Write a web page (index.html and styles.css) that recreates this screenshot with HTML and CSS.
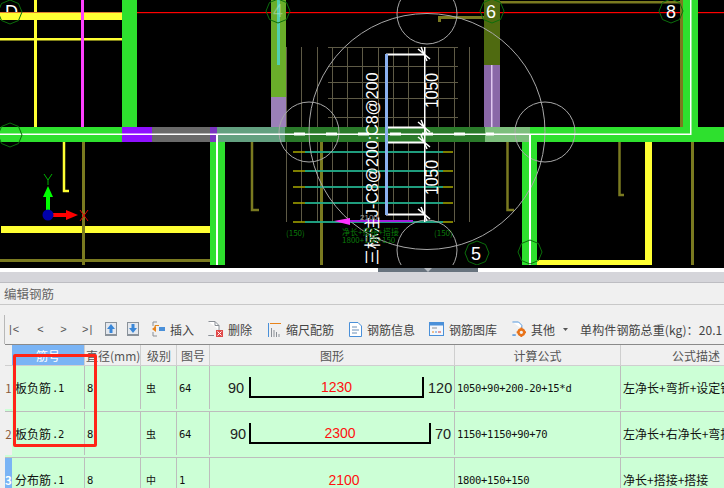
FILE: index.html
```html
<!DOCTYPE html>
<html lang="zh">
<head>
<meta charset="utf-8">
<title>编辑钢筋</title>
<link rel="stylesheet" href="styles.css">
</head>
<body>
<div class="app">
  <svg class="cad" width="724" height="268" viewBox="0 0 724 268">
    <defs>
      <polygon id="hex" points="0,-12 8.500,-8.500 12,0 8.500,8.500 0,12 -8.500,8.500 -12,0 -8.500,-8.500" fill="none" stroke="#0b6e0b"/>
      <path id="tick" d="M-6-5 6 5M-3-7 3 7" stroke="#fff" stroke-width="1.500" fill="none"/>
    </defs>
    <rect width="724" height="268" fill="#000"/>
    <text class="cad-text grid-no" x="5" y="18">D</text>
    <g fill="#ffff33">
      <rect x="34" y="0" width="3" height="127"/>
      <rect x="0" y="13" width="122" height="7"/>
      <rect x="0" y="38" width="122" height="2.500"/>
      <rect x="1" y="226" width="209" height="7"/>
      <rect x="645" y="142" width="7" height="123"/>
      <rect x="537" y="260" width="115" height="5"/>
    </g>
    <rect x="0" y="12" width="122" height="1" fill="#e08030"/>
    <rect x="81" y="0" width="3" height="127" fill="#ff40ff"/>
    <rect x="137" y="12" width="587" height="1.200" fill="#ff0000"/>
    <g fill="#7a7a20">
      <rect x="82" y="135" width="3" height="130"/>
      <rect x="0" y="259" width="217" height="3"/>
      <rect x="500" y="1" width="186" height="2.500"/>
      <rect x="691" y="142" width="3" height="123"/>
      <rect x="680" y="0" width="3" height="127"/>
      <rect x="320" y="135" width="3" height="130"/>
      <rect x="438" y="16" width="47" height="3"/>
      <rect x="438" y="16" width="3" height="6"/>
    </g>
    <g fill="none" stroke="#7a7a20" stroke-width="2.500">
      <path d="M259 135H252V210H259"/>
      <path d="M514 135H507.500V210H514"/>
      <path d="M619.500 142V195H624"/>
    </g>
    <path d="M69 135H64V191H69" fill="none" stroke="#ffff33" stroke-width="2.500"/>
    <g fill="#2ee02e">
      <rect x="122" y="0" width="15" height="127"/>
      <rect x="0" y="127" width="122" height="15"/>
      <rect x="210" y="142" width="15" height="123"/>
      <rect x="522" y="142" width="15" height="123"/>
      <rect x="683" y="0" width="15" height="127"/>
      <rect x="530" y="127" width="194" height="15"/>
    </g>
    <rect x="271" y="0" width="15" height="97" fill="#6aae2a"/>
    <rect x="271" y="97" width="15" height="30" fill="#9b80b8"/>
    <rect x="277" y="0" width="3" height="65" fill="#50d0b0"/>
    <rect x="484" y="0" width="16" height="65" fill="#4f6a10"/>
    <rect x="484" y="65" width="16" height="62" fill="#8a68a8"/>
    <rect x="491" y="65" width="1.500" height="62" fill="#e0c8f0"/>
    <g stroke="#5e5a46" stroke-width="1">
      <path d="M286.500 47V222M301.500 47V222M317.500 47V222M332.500 47V222M347.500 47V222M362.500 47V222M378.500 47V222M393.500 47V222M408.500 47V222M438.500 47V222M454.500 47V222M469.500 47V222"/>
      <path d="M328 47.500H458M328 66.500H458M328 82.500H458M328 98.500H458M328 117.500H458"/>
    </g>
    <g stroke="#a8a800" stroke-width="1.500">
      <path d="M293 152H453M293 171H453M293 187H453M293 203H453M293 222H453"/>
    </g>
    <g stroke="#00a8a8" stroke-width="1.500">
      <path d="M305 152H443M305 171H443M305 187H443M305 203H443M305 222H443"/>
    </g>
    <rect x="122" y="127" width="30" height="15" fill="#8f10ff"/>
    <rect x="152" y="127" width="58" height="15" fill="#6a6a6a"/>
    <rect x="210" y="127" width="7" height="15" fill="#7a35c0"/>
    <rect x="217" y="127" width="68" height="15" fill="#63a080"/>
    <rect x="285" y="127" width="200" height="15" fill="#2a7a2a"/>
    <rect x="485" y="127" width="45" height="15" fill="#7dbf7d"/>
    <g fill="none" stroke="#a8a8a8">
      <circle cx="427" cy="131.500" r="118"/>
      <circle cx="309" cy="132" r="30"/>
      <circle cx="427" cy="14" r="30"/>
      <circle cx="427" cy="250" r="30"/>
      <circle cx="545" cy="132" r="30"/>
    </g>
    <g fill="#fff">
      <rect x="0" y="133.500" width="690" height="1.500"/>
      <rect x="690" y="0" width="1.500" height="135"/>
      <rect x="216" y="134" width="2" height="131"/>
      <rect x="529" y="134" width="2" height="131"/>
      <rect x="424" y="47" width="1.500" height="175"/>
      <rect x="386" y="53.500" width="38" height="2"/>
      <rect x="386" y="126.500" width="38" height="2"/>
      <rect x="386" y="141.500" width="38" height="2"/>
      <rect x="386" y="213.500" width="38" height="2"/>
    </g>
    <path d="M294 134H494" stroke="#fff" stroke-width="3" stroke-dasharray="11 21" fill="none"/>
    <rect x="385" y="54" width="3" height="161" fill="#8ab0f0"/>
    <use href="#tick" x="424" y="54"/>
    <use href="#tick" x="424" y="127"/>
    <use href="#tick" x="424" y="142"/>
    <use href="#tick" x="424" y="214"/>
    <rect x="340" y="220" width="73" height="2" fill="#a020e0"/>
    <polygon points="334,221 350,218 350,225" fill="#ff30ff"/>
    <text class="cad-text dim" transform="translate(438 108) rotate(-90)" textLength="35" lengthAdjust="spacingAndGlyphs">1050</text>
    <text class="cad-text dim" transform="translate(438 195) rotate(-90)" textLength="35" lengthAdjust="spacingAndGlyphs">1050</text>
    <text class="cad-text note" transform="translate(378 265) rotate(-90)">三标注J-C8@200:C8@200</text>
    <text class="cad-text tiny" x="360" y="220">2100</text>
    <g class="cad-green">
      <text x="286" y="236">(150)</text>
      <text x="342" y="235">净长+搭接+搭接</text>
      <text x="342" y="243">1800+150+150</text>
      <text x="434" y="236">(150)</text>
    </g>
    <use href="#hex" x="10" y="12"/>
    <use href="#hex" x="10" y="135"/>
    <use href="#hex" x="278" y="11"/>
    <use href="#hex" x="492" y="11"/>
    <use href="#hex" x="671" y="11"/>
    <use href="#hex" x="477" y="253"/>
    <use href="#hex" x="530" y="252"/>
    <text class="cad-text grid-no faint" x="273" y="17">4</text>
    <text class="cad-text grid-no" x="486" y="18">6</text>
    <text class="cad-text grid-no" x="666" y="18">8</text>
    <text class="cad-text grid-no" x="471" y="260">5</text>
    <rect x="46" y="196" width="4" height="15" fill="#00ff00"/>
    <polygon points="48,186 53,197 43,197" fill="#00ff00"/>
    <path d="M44 174 48 180 52 174M48 180V185" stroke="#00b000" fill="none"/>
    <rect x="53" y="213" width="14" height="4" fill="#ff0000"/>
    <polygon points="78,215 66,210 66,220" fill="#ff0000"/>
    <path d="M80 210 88 221M88 210 80 221" stroke="#e00000" fill="none"/>
    <circle cx="48" cy="215" r="5.500" fill="#0000aa"/>
    <rect y="265" width="724" height="3" fill="#000"/>
  </svg>

  <div class="splitter"><div class="handle"><svg width="8" height="4" viewBox="0 0 8 4"><polygon points="0,0 8,0 4,4" fill="#b8bec4"/></svg></div></div>
  <div class="band"></div>
  <div class="title">编辑钢筋</div>

  <div class="toolbar">
    <div class="tools">
      <span class="nav nav-first">|&lt;</span>
      <span class="nav">&lt;</span>
      <span class="nav">&gt;</span>
      <span class="nav nav-last">&gt;|</span>
      <svg class="ico ico-up" width="12" height="14" viewBox="0 0 12 14"><rect width="12" height="14" fill="#8a929a"/><rect x="1" y="1" width="10" height="11" fill="#e4e8ee"/><path d="M6 2 10 7H7.500V11H4.500V7H2Z" fill="#3a87d8"/></svg>
      <svg class="ico ico-down" width="12" height="14" viewBox="0 0 12 14"><rect width="12" height="14" fill="#8a929a"/><rect x="1" y="1" width="10" height="11" fill="#e4e8ee"/><path d="M6 11 10 6H7.500V2H4.500V6H2Z" fill="#3a87d8"/></svg>
      <svg class="ico ico-insert" width="13" height="16" viewBox="0 0 13 16"><path d="M5 1H1V5M1 11V15H5" fill="none" stroke="#8a8f96"/><path d="M7 4.500H3V7" fill="none" stroke="#e08a20"/><path d="M0 8 4 5V11Z" fill="#e8831a"/><rect x="7" y="6" width="6" height="4" fill="#4a90d9"/></svg>
      <span class="label">插入</span>
      <svg class="ico ico-del" width="15" height="16" viewBox="0 0 15 16"><path d="M.5.500H7L11 4.500V9M6 14.500H.5Z" fill="#fff" stroke="#8a8f96"/><path d="M7 .5V4.500H11" fill="none" stroke="#8a8f96"/><rect x="8" y="9" width="7" height="7" fill="#e04848"/><path d="M9.500 10.500 13.500 14.500M13.500 10.500 9.500 14.500" stroke="#fff"/></svg>
      <span class="label">删除</span>
      <svg class="ico ico-scale" width="13" height="15" viewBox="0 0 13 15"><path d="M.5 1V15" stroke="#4a90d9"/><path d="M2 1.500H13" stroke="#e8831a"/><path d="M3.500 15V6M6 15V8M8.500 15V10M11 15V12" stroke="#8a8f96"/></svg>
      <span class="label">缩尺配筋</span>
      <svg class="ico ico-info" width="13" height="15" viewBox="0 0 13 15"><path d="M.5.500H9L12.500 4V14.500H.5Z" fill="#fff" stroke="#4a90d9"/><path d="M3 5H8M3 8H10M3 11H8" stroke="#6a8fb8"/></svg>
      <span class="label">钢筋信息</span>
      <svg class="ico ico-lib" width="15" height="14" viewBox="0 0 15 14"><rect x=".5" y=".5" width="14" height="13" fill="#f4f7fb" stroke="#4a90d9"/><rect x="1" y="1" width="13" height="2.500" fill="#4a90d9"/><path d="M3 6H8" stroke="#8a8f96"/><path d="M3 10H5" stroke="#e8831a"/><path d="M6 10H8" stroke="#4a90d9"/><path d="M9 10H12" stroke="#d04040"/></svg>
      <span class="label">钢筋图库</span>
      <svg class="ico ico-other" width="14" height="16" viewBox="0 0 15 16"><path d="M.5.500H7L10.500 4V8M4 14.500H.5Z" fill="#fff" stroke="#4a90d9"/><circle cx="10" cy="11.500" r="3" fill="none" stroke="#e8731a" stroke-width="2.500"/><path d="M10 6.500V8M10 15V16.500M5 11.500H6.500M13.500 11.500H15" stroke="#e8731a" stroke-width="2"/></svg>
      <span class="label">其他</span>
      <svg class="caret" width="5" height="3" viewBox="0 0 5 3"><polygon points="0,0 5,0 2.500,3" fill="#555"/></svg>
      <span class="label weight">单构件钢筋总重(kg)：20.1</span>
    </div>
  </div>

  <div class="sheet">
    <div class="row head">
      <div class="cell gutter"></div>
      <div class="cell sel">筋号</div>
      <div class="cell">直径(mm)</div>
      <div class="cell">级别</div>
      <div class="cell">图号</div>
      <div class="cell">图形</div>
      <div class="cell">计算公式</div>
      <div class="cell">公式描述</div>
    </div>
    <div class="row body">
      <div class="cell gutter">1</div>
      <div class="cell name">板负筋<span class="mono">.1</span></div>
      <div class="cell mono">8</div>
      <div class="cell grade">虫</div>
      <div class="cell mono">64</div>
      <div class="cell shape"><span class="dim-l">90</span><div class="bar bar-a">1230</div><span class="dim-r">120</span></div>
      <div class="cell mono">1050+90+200-20+15*d</div>
      <div class="cell">左净长+弯折+设定锚固</div>
    </div>
    <div class="row body">
      <div class="cell gutter">2</div>
      <div class="cell name">板负筋<span class="mono">.2</span></div>
      <div class="cell mono">8</div>
      <div class="cell grade">虫</div>
      <div class="cell mono">64</div>
      <div class="cell shape"><span class="dim-l dim-l2">90</span><div class="bar bar-b">2300</div><span class="dim-r">70</span></div>
      <div class="cell mono">1150+1150+90+70</div>
      <div class="cell">左净长+右净长+弯折+弯折</div>
    </div>
    <div class="row body">
      <div class="cell gutter current">3</div>
      <div class="cell name">分布筋<span class="mono">.1</span></div>
      <div class="cell mono">8</div>
      <div class="cell grade">中</div>
      <div class="cell mono">1</div>
      <div class="cell shape"><div class="bar bar-plain">2100</div></div>
      <div class="cell mono">1800+150+150</div>
      <div class="cell">净长+搭接+搭接</div>
    </div>
  </div>

  <div class="redbox"></div>
</div>
</body>
</html>
```

FILE: styles.css
```css
* { box-sizing: border-box; }
html, body { margin: 0; padding: 0; background: #f0f0f0; }
.app {
  position: relative;
  width: 724px;
  height: 488px;
  overflow: hidden;
  font-family: "Noto Sans CJK SC", "Liberation Sans", sans-serif;
  font-size: 12px;
  color: #333;
  display: flex;
  flex-direction: column;
}
.cad { display: block; flex: none; background: #000; }
.cad-text { font-family: "Liberation Sans", "Noto Sans CJK SC", sans-serif; fill: #fff; }
.cad-text.dim { font-size: 18px; }
.cad-text.note { font-size: 16px; }
.cad-text.tiny { font-size: 8px; fill: #aaa; }
.cad-text.grid-no { font-size: 18px; }
.cad-text.faint { fill: #c8e8d8; fill-opacity: .45; }
.cad-green text { font-family: "Noto Sans CJK SC", sans-serif; font-size: 8px; fill: #0a7a0a; }

.splitter { flex: none; height: 4px; background: #fff; padding-left: 378px; }
.handle { width: 100px; height: 4px; background: #68737e; display: flex; justify-content: center; }
.handle svg { display: block; }
.band { flex: none; height: 11px; background: #d5d5da; border-bottom: 1px solid #bdbdc2; }
.title {
  flex: none;
  height: 22px;
  line-height: 22px;
  padding-left: 4px;
  color: #666;
  font-size: 12.5px;
  border-bottom: 1px solid #c8c8c8;
}
.toolbar { flex: none; height: 39px; padding: 10px 0 0 4px; }
.tools {
  height: 29px;
  display: flex;
  align-items: center;
  border-left: 1px solid #b8b8b8;
  white-space: nowrap;
  padding-bottom: 1px;
}
.nav { flex: none; width: 23px; font-size: 11px; font-family: "Liberation Sans", sans-serif; color: #555; text-align: center; }
.nav-first { width: 17px; margin-right: 7px; text-align: left; padding-left: 4px; letter-spacing: 1px; }
.nav-last { width: 20px; text-align: left; padding-left: 7px; letter-spacing: 1px; }
.ico { flex: none; display: block; }
.ico-up { margin-left: 10px; }
.ico-down { margin-left: 10px; }
.ico-insert { margin-left: 13px; }
.ico-del { margin-left: 14px; }
.ico-scale { margin-left: 16px; }
.ico-info { margin-left: 15px; }
.ico-lib { margin-left: 14px; }
.ico-other { margin-left: 15px; }
.label { flex: none; margin-left: 5px; font-size: 12px; color: #444; }
.caret { flex: none; margin-left: 8px; }
.weight { margin-left: 12px; letter-spacing: .1px; }

.sheet { flex: none; margin-left: 5px; }
.row {
  display: grid;
  grid-template-columns: 7px 73px 56px 36px 33px 245px 166px 1fr;
}
.cell {
  display: flex;
  align-items: center;
  padding-left: 2px;
  border-right: 1px solid #bdbdbd;
  white-space: nowrap;
  overflow: hidden;
  min-width: 0;
}
.cell:last-child { border-right: 0; }
.head { height: 22px; background: #f0f0f0; border-top: 1px solid #8a8a8a; border-bottom: 1px solid #cfcfcf; color: #555; font-size: 12px; }
.head .cell { justify-content: center; padding-left: 0; border-right-color: #cfcfcf; }
.head .cell:nth-child(3) { justify-content: flex-start; padding-left: 1px; }
.head .cell:nth-child(4) { justify-content: flex-start; padding-left: 6px; }
.head .cell:nth-child(5) { justify-content: flex-start; padding-left: 4px; }
.head .cell:nth-child(8) { justify-content: flex-start; padding-left: 51px; }
.head .gutter { background: #fafafa; }
.head .sel { background: #7ab4f5; color: #fff; }
.body { height: 46px; background: #ccffd6; border-bottom: 1px solid #bdbdbd; color: #111; font-size: 12px; padding-bottom: 2px; }
.mono { font-family: "DejaVu Sans Mono", monospace; font-size: 10.5px; letter-spacing: -.3px; }
.name.cell { padding-left: 3px; }
.name .mono { margin-left: 1px; }
.grade.cell { padding-left: 5px; font-size: 10px; }
.gutter.cell { padding-left: 0; justify-content: center; color: #8a5a3a; font-size: 11.5px; border-right: 0; background: #f0f0f0; }
.gutter.current.cell { background: #7ab4f5; color: #fff; font-weight: 700; }
.shape.cell { font-family: "Liberation Sans", sans-serif; padding-left: 18px; overflow: visible; }
.dim-l { flex: none; width: 21px; font-size: 14.5px; color: #222; }
.dim-l2 { padding-left: 2px; }
.dim-r { flex: none; margin-left: 4px; font-size: 14.5px; color: #222; }
.bar {
  flex: none;
  height: 21px;
  display: flex;
  align-items: center;
  justify-content: center;
  color: #ff1010;
  font-size: 14px;
  border: 2px solid #000;
  border-top: 0;
}
.bar-a { width: 175px; }
.bar-b { width: 182px; }
.bar-plain { width: 190px; margin-left: 21px; border: 0; }

.redbox {
  position: absolute;
  left: 13px;
  top: 354px;
  width: 84px;
  height: 93px;
  border: 3px solid #ff2418;
  border-radius: 2px;
}
```
